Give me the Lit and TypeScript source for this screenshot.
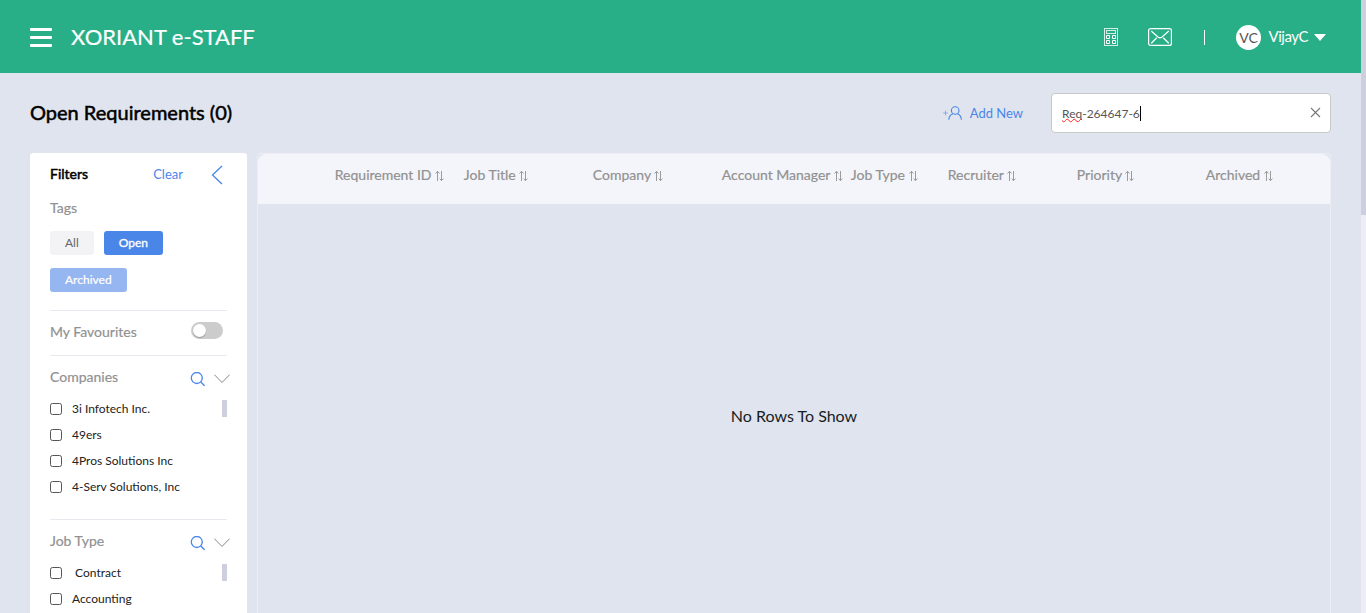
import { LitElement, html, css } from "lit";
import { customElement, state } from "lit/decorators.js";
import { classMap } from "lit/directives/class-map.js";
import { styleMap } from "lit/directives/style-map.js";

interface Column {
  label: string;
  width: number;
  track: number;
}

interface FilterGroup {
  title: string;
  items: string[];
}

const COLUMNS: Column[] = [
  { label: "Requirement ID", width: 129, track: 97 },
  { label: "Job Title", width: 129, track: 52 },
  { label: "Company", width: 129, track: 58 },
  { label: "Account Manager", width: 129, track: 109 },
  { label: "Job Type", width: 97, track: 55 },
  { label: "Recruiter", width: 129, track: 56 },
  { label: "Priority", width: 129, track: 45 },
  { label: "Archived", width: 124, track: 55 },
];

const GROUPS: FilterGroup[] = [
  {
    title: "Companies",
    items: ["3i Infotech Inc.", "49ers", "4Pros Solutions Inc", "4-Serv Solutions, Inc"],
  },
  { title: "Job Type", items: [" Contract", "Accounting"] },
];

const sortIcon = html`<svg class="sort" width="9" height="12" viewBox="0 0 9 12">
  <path d="M2.5 11V1.5M.5 3.5l2-2.2 2 2.2M6.5 1v9.5M4.7 8.6l1.8 2 2-2" />
</svg>`;

@customElement("app-header")
export class AppHeader extends LitElement {
  static styles = css`
    :host {
      display: flex;
      align-items: center;
      box-sizing: border-box;
      height: 73px;
      padding: 0 34px 0 30px;
      background: #28af87;
      color: #fff;
      flex: none;
    }
    .menu {
      display: grid;
      gap: 5px;
      width: 22px;
      margin-top: 2px;
    }
    .menu i {
      height: 3px;
      background: #fff;
      border-radius: 1px;
    }
    .brand {
      margin-left: 19px;
      font-size: 22px;
      line-height: 26px;
      -webkit-text-stroke: 0.2px #fff;
      flex: 1;
    }
    svg {
      display: block;
      fill: none;
      stroke: #fff;
    }
    .calc {
      margin: 1px 29px 0 0;
    }
    .bar {
      width: 1px;
      height: 15px;
      background: #fff;
      margin: 2px 31px 0 32px;
    }
    .avatar {
      width: 25px;
      height: 25px;
      line-height: 25px;
      border-radius: 50%;
      background: #fff;
      color: #555;
      font-size: 14px;
      text-align: center;
      margin-top: 2px;
    }
    .user {
      font-size: 15px;
      letter-spacing: -0.45px;
      margin: -1px 5.5px 0 7.5px;
      width: 40px;
      white-space: nowrap;
    }
    .caret {
      border: 6.5px solid transparent;
      border-top: 7px solid #fff;
      border-bottom: 0;
      margin: 2px 1px 0 0;
    }
  `;
  render() {
    return html`
      <div class="menu"><i></i><i></i><i></i></div>
      <div class="brand">XORIANT e-STAFF</div>
      <svg class="calc" width="15" height="19" viewBox="0 0 15 19">
        <rect x=".5" y=".5" width="13" height="17" stroke-opacity=".8" />
        <rect x="2.5" y="2.5" width="9" height="3" stroke-opacity=".8" />
        <path d="M2.5 7.5h3v3h-3zM8.5 7.5h3v3h-3zM2.5 12.5h3v3h-3zM8.5 12.5h3v3h-3z" />
      </svg>
      <svg width="24" height="18" viewBox="0 0 24 18">
        <rect x=".6" y=".6" width="22.8" height="16.8" rx="2" stroke-width="1.2" />
        <path d="M3.2 3l7.1 6.2q1.7 1.2 3.4 0L20.8 3M3.2 15.2l5.6-5.4M20.8 15.2l-5.6-5.4" stroke-width="1.2" />
      </svg>
      <div class="bar"></div>
      <div class="avatar">VC</div>
      <div class="user">VijayC</div>
      <div class="caret"></div>
    `;
  }
}

@customElement("filter-panel")
export class FilterPanel extends LitElement {
  @state() private tag = "Open";

  static styles = css`
    :host {
      display: block;
      box-sizing: border-box;
      width: 217px;
      padding: 0 20px;
      background: #fff;
      border-radius: 3px 3px 0 0;
      color: #919191;
      font-size: 14px;
      -webkit-text-stroke: 0.2px currentColor;
      flex: none;
    }
    svg {
      display: block;
      fill: none;
      stroke: #4a86e8;
      flex: none;
    }
    .top {
      display: flex;
      align-items: center;
      height: 43px;
    }
    .title {
      color: #000;
      -webkit-text-stroke: 0.5px #000;
      margin-top: -2px;
      flex: 1;
    }
    .clear {
      color: #4a86e8;
      font-size: 13px;
      -webkit-text-stroke: 0;
      margin: -2px 28px 0 0;
    }
    .back {
      margin-right: 4px;
    }
    .tags-label {
      line-height: 20px;
      margin-top: 2px;
    }
    .tags {
      display: flex;
      flex-wrap: wrap;
      gap: 13px 10px;
      margin-top: 13px;
      padding-bottom: 18px;
    }
    .tag {
      height: 24px;
      line-height: 24px;
      padding: 0 15px;
      border-radius: 3px;
      font-size: 12px;
      background: #f3f3f5;
      color: #666;
      box-sizing: border-box;
      cursor: pointer;
      -webkit-text-stroke: 0;
    }
    .tag.on {
      background: #4a86e8;
      color: #fff;
      -webkit-text-stroke: 0.3px #fff;
    }
    .tag.soft {
      background: #95b6f0;
      color: #fff;
      -webkit-text-stroke: 0.2px #fff;
    }
    .row {
      display: flex;
      align-items: center;
      justify-content: space-between;
      box-sizing: border-box;
      height: 45px;
      border-top: 1px solid #e8e8ee;
      padding-right: 4px;
    }
    .row span {
      margin-top: -3px;
    }
    .switch {
      width: 32px;
      height: 17px;
      padding: 2px;
      box-sizing: border-box;
      border-radius: 9px;
      background: #ccc;
      margin-top: -5px;
    }
    .knob {
      width: 13px;
      height: 13px;
      border-radius: 50%;
      background: #fff;
      box-shadow: 0 1px 1px #999;
    }
    .group {
      border-top: 1px solid #e8e8ee;
      height: 163px;
    }
    .head {
      display: flex;
      align-items: center;
      height: 42px;
      margin-right: -3px;
      box-sizing: border-box;
    }
    .head span {
      margin-top: -1px;
      flex: 1;
    }
    .mag {
      margin: 4px 9px 0 0;
    }
    .chev {
      margin-top: 3px;
    }
    .body {
      display: flex;
      justify-content: space-between;
      height: 104px;
      font-size: 12px;
      color: #222;
      -webkit-text-stroke: 0;
    }
    .thumb {
      width: 5px;
      height: 17px;
      margin-top: 2px;
      background: #cdcfdf;
    }
    .list {
      margin-top: -3px;
    }
    .item {
      display: flex;
      align-items: center;
      height: 26px;
      white-space: pre;
    }
    .box {
      width: 12px;
      height: 12px;
      box-sizing: border-box;
      border: 1px solid #555;
      border-radius: 2.5px;
      margin: 1px 10px 0 0;
    }
    .item span {
      margin-top: 1px;
    }
  `;

  render() {
    return html`
      <div class="top">
        <span class="title">Filters</span>
        <span class="clear">Clear</span>
        <svg class="back" width="12" height="20" viewBox="0 0 12 20">
          <path d="M11 1L1.5 10 11 19" stroke-width="1.3" />
        </svg>
      </div>
      <div class="tags-label">Tags</div>
      <div class="tags">
        ${["All", "Open", "Archived"].map(
          (t) => html`<div
            class=${classMap({ tag: true, on: t === this.tag, soft: t === "Archived" && t !== this.tag })}
            @click=${() => (this.tag = t)}
          >${t}</div>`
        )}
      </div>
      <div class="row">
        <span>My Favourites</span>
        <div class="switch"><div class="knob"></div></div>
      </div>
      ${GROUPS.map(
        (g) => html`<div class="group">
          <div class="head">
            <span>${g.title}</span>
            <svg class="mag" width="15" height="15" viewBox="0 0 15 15">
              <circle cx="6.8" cy="6" r="5.5" stroke-width="1.3" />
              <path d="M10.8 10l3.8 3.8" stroke-width="1.4" />
            </svg>
            <svg class="chev" width="16" height="10" viewBox="0 0 16 10">
              <path d="M.3 .6L8 8.5 15.7 .6" stroke="#888" />
            </svg>
          </div>
          <div class="body">
            <div class="list">
              ${g.items.map((i) => html`<div class="item"><div class="box"></div><span>${i}</span></div>`)}
            </div>
            <div class="thumb"></div>
          </div>
        </div>`
      )}
    `;
  }
}

@customElement("requirements-grid")
export class RequirementsGrid extends LitElement {
  static styles = css`
    :host {
      display: flex;
      flex-direction: column;
      box-sizing: border-box;
      flex: 1;
      min-width: 0;
      border: 1px solid #edeef5;
      border-bottom: 0;
      border-radius: 4px 4px 0 0;
    }
    .head {
      display: flex;
      height: 50px;
      box-sizing: border-box;
      padding: 10px 0 0 76.8px;
      background: #f4f5fa;
      border-radius: 8px 8px 0 0;
      color: #919191;
      font-size: 14px;
      -webkit-text-stroke: 0.2px #919191;
      line-height: 21px;
      white-space: nowrap;
      flex: none;
    }
    .col {
      display: flex;
      flex: none;
    }
    .sort {
      fill: none;
      stroke: #919191;
      stroke-width: 0.9;
      margin: 6px 0 0 3.2px;
      flex: none;
    }
    .empty {
      height: 422px;
      display: flex;
      align-items: center;
      justify-content: center;
      font-size: 16px;
      color: #181d1f;
      flex: none;
    }
  `;
  render() {
    return html`
      <div class="head">
        ${COLUMNS.map(
          (c) => html`<div class="col" style=${styleMap({ width: c.width + "px" })}>
            <span style=${styleMap({ width: c.track + "px" })}>${c.label}</span>${sortIcon}
          </div>`
        )}
      </div>
      <div class="empty">No Rows To Show</div>
    `;
  }
}

@customElement("app-root")
export class AppRoot extends LitElement {
  static styles = css`
    :host {
      display: flex;
      height: 613px;
      overflow: hidden;
      font-family: Lato, "Liberation Sans", sans-serif;
      background: #e0e4ee;
    }
    .page {
      display: flex;
      flex-direction: column;
      width: 1361px;
    }
    .scroll {
      width: 5px;
      background: #ededf6;
    }
    .scroll div {
      height: 215px;
      background: #cdcfdf;
    }
    .toolbar {
      display: flex;
      align-items: center;
      height: 80px;
      padding: 0 30px;
      box-sizing: border-box;
      flex: none;
    }
    h1 {
      margin: -2px 0 0;
      font-size: 20px;
      font-weight: 400;
      -webkit-text-stroke: 0.5px #000;
      flex: 1;
    }
    svg {
      display: block;
      fill: none;
    }
    .add {
      display: flex;
      align-items: center;
      gap: 8px;
      font-size: 13px;
      color: #4a86e8;
      margin-right: 28px;
    }
    .add span {
      margin-top: -1px;
    }
    .add svg {
      stroke: #4a86e8;
    }
    .search {
      display: flex;
      align-items: center;
      box-sizing: border-box;
      width: 280px;
      height: 40px;
      padding: 0 9px 0 10px;
      border: 1px solid #c8c8c8;
      border-radius: 4px;
      background: #fff;
      font-size: 12px;
      color: #555;
    }
    .query {
      display: flex;
      align-items: center;
      margin-top: 1px;
    }
    .wavy {
      text-decoration: underline wavy #f22 1px;
      text-decoration-skip-ink: none;
      text-underline-offset: 0px;
    }
    .cursor {
      width: 1px;
      height: 15px;
      background: #000;
    }
    .x {
      margin: -2px 0 0 auto;
      stroke: #777;
      stroke-width: 1.1;
    }
    .main {
      display: flex;
      gap: 10px;
      padding: 0 30px;
      flex: 1;
      min-height: 0;
    }
  `;
  render() {
    return html`
      <div class="page">
        <app-header></app-header>
        <div class="toolbar">
          <h1>Open Requirements (0)</h1>
          <div class="add">
            <svg width="19" height="14" viewBox="0 0 19 14">
              <path d="M0 7h5M2.5 4.5v5" stroke-opacity=".6" stroke-width=".9" />
              <circle cx="12.2" cy="4.5" r="3.8" stroke-width="1.1" />
              <path d="M5.8 13.7c.3-3.5 2-5.2 4.1-5.9M18.4 13.7c-.3-3.5-2-5.2-4-5.9" stroke-width="1.1" />
            </svg>
            <span>Add New</span>
          </div>
          <div class="search">
            <div class="query">
              <span><span class="wavy">Req</span>-264647-6</span><i class="cursor"></i>
            </div>
            <svg class="x" width="11" height="11" viewBox="0 0 11 11"><path d="M1 1l9 9M10 1l-9 9" /></svg>
          </div>
        </div>
        <div class="main">
          <filter-panel></filter-panel>
          <requirements-grid></requirements-grid>
        </div>
      </div>
      <div class="scroll"><div></div></div>
    `;
  }
}
